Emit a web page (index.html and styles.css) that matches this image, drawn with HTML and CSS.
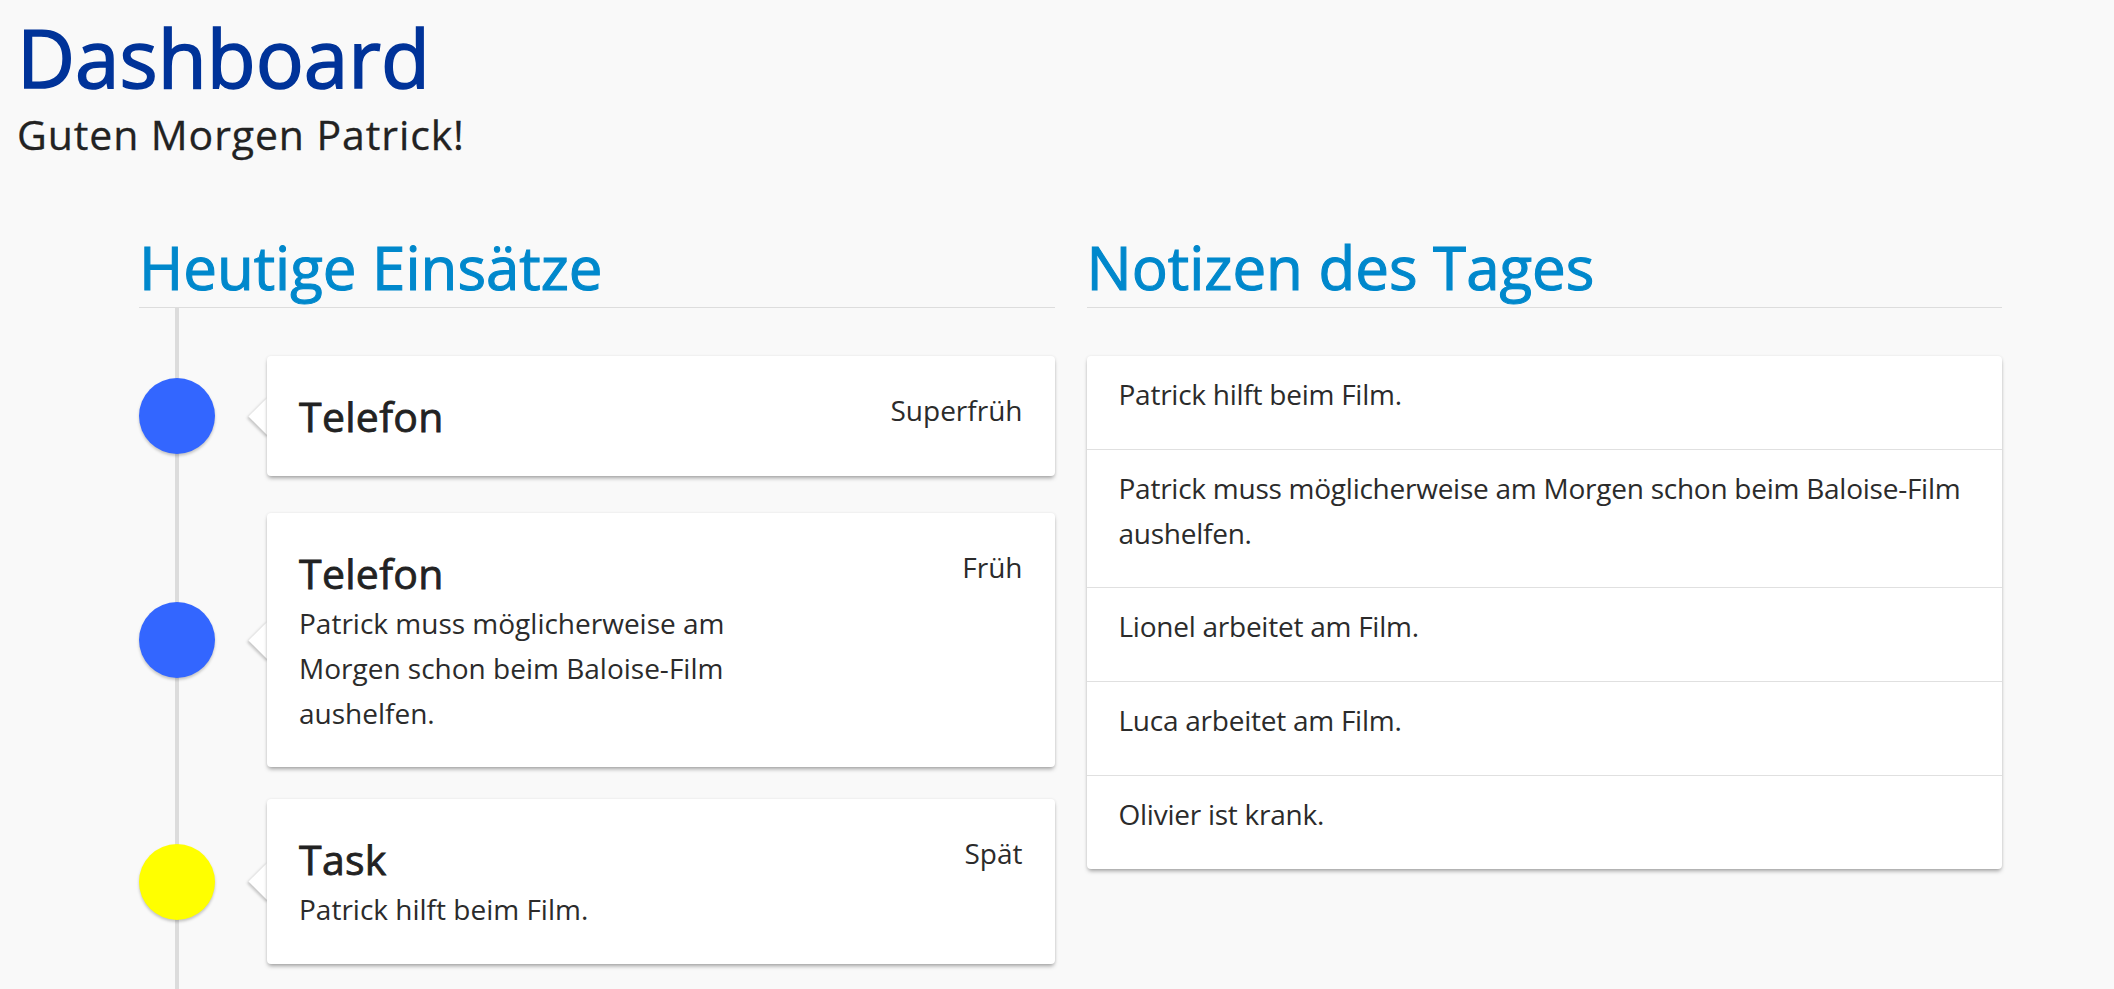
FILE: index.html
```html
<!DOCTYPE html>
<html lang="de">
<head>
<meta charset="utf-8">
<title>Dashboard</title>
<link rel="stylesheet" href="styles.css">
</head>
<body>
<header class="page-header">
  <h1 class="page-title">Dashboard</h1>
  <p class="greeting">Guten Morgen Patrick!</p>
</header>
<main class="board">
  <section class="panel">
    <h2 class="panel-title">Heutige Einsätze</h2>
    <ol class="timeline">
      <li class="tl-item">
        <span class="tl-dot tl-dot--blue"></span>
        <article class="shift-card">
          <div class="shift-main">
            <h3 class="shift-title">Telefon</h3>
          </div>
          <span class="shift-time">Superfrüh</span>
        </article>
      </li>
      <li class="tl-item">
        <span class="tl-dot tl-dot--blue"></span>
        <article class="shift-card">
          <div class="shift-main">
            <h3 class="shift-title">Telefon</h3>
            <p class="shift-desc">Patrick muss möglicherweise am Morgen schon beim Baloise-Film aushelfen.</p>
          </div>
          <span class="shift-time">Früh</span>
        </article>
      </li>
      <li class="tl-item">
        <span class="tl-dot tl-dot--yellow"></span>
        <article class="shift-card">
          <div class="shift-main">
            <h3 class="shift-title">Task</h3>
            <p class="shift-desc">Patrick hilft beim Film.</p>
          </div>
          <span class="shift-time">Spät</span>
        </article>
      </li>
    </ol>
  </section>
  <section class="panel">
    <h2 class="panel-title">Notizen des Tages</h2>
    <ul class="notes">
      <li class="note"><p class="note-text">Patrick hilft beim Film.</p></li>
      <li class="note"><p class="note-text">Patrick muss möglicherweise am Morgen schon beim Baloise-Film aushelfen.</p></li>
      <li class="note"><p class="note-text">Lionel arbeitet am Film.</p></li>
      <li class="note"><p class="note-text">Luca arbeitet am Film.</p></li>
      <li class="note"><p class="note-text">Olivier ist krank.</p></li>
    </ul>
  </section>
</main>
</body>
</html>
```

FILE: styles.css
```css
html, body {
  margin: 0;
  padding: 0;
}

body {
  background: #f9f9f9;
  color: #222;
  font-family: "Open Sans", "Noto Sans", sans-serif;
}

.page-header {
  padding: 17px 0 0 17px;
}

.page-title {
  margin: 0;
  font-size: 80px;
  line-height: 80px;
  font-weight: 400;
  -webkit-text-stroke: 1.6px #003399;
  color: #003399;
}

.greeting {
  margin: 14px 0 0;
  font-size: 41px;
  line-height: 46px;
  font-weight: 400;
  letter-spacing: 0.9px;
  -webkit-text-stroke: 0.3px #222;
  color: #222;
}

.board {
  display: grid;
  grid-template-columns: 1fr 1fr;
  gap: 32px;
  margin-top: 74px;
  padding: 0 112px 0 139px;
}

.panel {
  min-width: 0;
}

.panel-title {
  margin: 0;
  padding-bottom: 4px;
  border-bottom: 1px solid #dddddd;
  font-size: 60px;
  line-height: 72px;
  font-weight: 400;
  -webkit-text-stroke: 1.1px #0088cc;
  color: #0088cc;
}

/* Timeline */
.timeline {
  position: relative;
  display: flex;
  flex-direction: column;
  gap: 32px;
  list-style: none;
  margin: 0;
  padding: 48px 0 40px;
}

.timeline::before {
  content: "";
  position: absolute;
  left: 36px;
  top: 0;
  bottom: 0;
  width: 4px;
  background: #dcdcdc;
}

.tl-item {
  display: flex;
  align-items: center;
  gap: 52px;
}

.tl-item:first-child {
  margin-bottom: 5px;
}

.tl-dot {
  position: relative;
  z-index: 1;
  flex: none;
  width: 76px;
  height: 76px;
  border-radius: 50%;
  box-shadow: 0 2px 3px rgba(0, 0, 0, 0.22);
}

.tl-dot--blue {
  background: #3366ff;
}

.tl-dot--yellow {
  background: #ffff00;
}

.shift-card {
  position: relative;
  flex: 1;
  display: flex;
  justify-content: space-between;
  align-items: flex-start;
  padding: 32px;
  background: #fff;
  border-radius: 4px;
  box-shadow: 0 3px 4px -1px rgba(0, 0, 0, 0.35), 0 0 3px rgba(0, 0, 0, 0.08);
}

.shift-card::before {
  content: "";
  position: absolute;
  z-index: -1;
  left: -13.5px;
  top: 50%;
  width: 27px;
  height: 27px;
  margin-top: -13.5px;
  background: #fff;
  transform: rotate(45deg);
  box-shadow: 0 2px 3px rgba(0, 0, 0, 0.22);
}

.shift-main {
  max-width: 470px;
}

.shift-title {
  margin: 0;
  font-size: 41px;
  line-height: 56px;
  font-weight: 400;
  letter-spacing: 0.3px;
  -webkit-text-stroke: 0.8px #222;
  color: #222;
}

.shift-desc {
  margin: 0;
  font-size: 28px;
  line-height: 44.8px;
  color: #2b2b2b;
}

.shift-time {
  flex: none;
  font-size: 28px;
  line-height: 44.8px;
  color: #2b2b2b;
}

/* Notes */
.notes {
  list-style: none;
  margin: 48px 0 0;
  padding: 0;
  background: #fff;
  border-radius: 4px;
  box-shadow: 0 3px 4px -1px rgba(0, 0, 0, 0.35), 0 0 3px rgba(0, 0, 0, 0.08);
}

.note {
  padding: 16px 32px 32px;
  border-top: 1px solid #e0e0e0;
}

.note:first-child {
  border-top: 0;
}

.note-text {
  margin: 0;
  font-size: 28px;
  line-height: 44.8px;
  letter-spacing: -0.25px;
  color: #2b2b2b;
}
```
